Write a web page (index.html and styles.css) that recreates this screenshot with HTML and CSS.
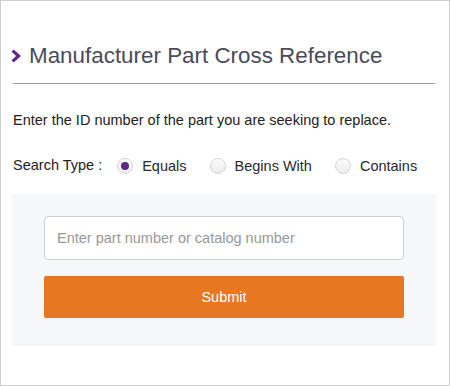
FILE: index.html
```html
<!DOCTYPE html>
<html lang="en">
<head>
  <meta charset="UTF-8" />
  <title>Manufacturer Part Cross Reference</title>
  <link rel="stylesheet" href="styles.css">
</head>
<body>
  <div class="page">
    <h2 class="title">
      <svg class="chevron" width="10" height="14" viewBox="0 0 10 14">
        <path d="M1.6 1.6 L7.6 7 L1.6 12.4" fill="none" stroke="#5b2a86" stroke-width="3.2"/>
      </svg>
      Manufacturer Part Cross Reference
    </h2>
    <hr class="rule">

    <p class="intro">Enter the ID number of the part you are seeking to replace.</p>

    <div class="search-type">
      <span class="label">Search Type :</span>
      <label class="option"><span class="radio checked"></span>Equals</label>
      <label class="option"><span class="radio"></span>Begins With</label>
      <label class="option"><span class="radio"></span>Contains</label>
    </div>

    <div class="panel">
      <input class="part-input" type="text" placeholder="Enter part number or catalog number">
      <button class="submit">Submit</button>
    </div>
  </div>
</body>
</html>
```

FILE: styles.css
```css
html, body {
  margin: 0;
  padding: 0;
}

body {
  font-family: "Liberation Sans", Arial, sans-serif;
  background: #fff;
}

.page {
  width: 422px;
  height: 384px;
  border: 1px solid #cfcfcf;
  padding: 0 14px 0 12px;
}

.title {
  display: flex;
  align-items: center;
  margin: 0 0 0 -2px;
  padding-top: 40px;
  height: 29px;
  font-size: 22.4px;
  font-weight: normal;
  color: #4b4b57;
}

.chevron {
  margin-right: 8px;
}

.rule {
  border: none;
  border-top: 1px solid #9a9a9a;
  margin: 13px 0 0;
}

.intro {
  margin: 28px 0 0;
  font-size: 14.5px;
  color: #222;
}

.search-type {
  display: flex;
  align-items: center;
  margin-top: 30px;
  font-size: 14.5px;
  color: #222;
  white-space: nowrap;
}

.label {
  margin-right: 15px;
  position: relative;
  top: -1px;
}

.option {
  display: flex;
  align-items: center;
  margin-right: 23px;
  color: #2a2a2a;
}

.option:last-child {
  margin-right: 0;
}

.radio {
  flex-shrink: 0;
  width: 14px;
  height: 14px;
  border: 1px solid #d5d5d5;
  border-radius: 50%;
  background: linear-gradient(#fcfcfc, #ececec);
  margin-right: 9px;
  position: relative;
}

.radio.checked::after {
  content: "";
  position: absolute;
  left: 3px;
  top: 3px;
  width: 8px;
  height: 8px;
  border-radius: 50%;
  background: #5b2a86;
}

.panel {
  margin-top: 20px;
  background: #f6f7f9;
  padding: 22px 31px 26px;
  box-shadow: 0 1px 2px rgba(0,0,0,0.08);
}

.part-input {
  display: block;
  width: 100%;
  height: 44px;
  box-sizing: border-box;
  border: 1px solid #cdd0d4;
  border-radius: 4px;
  padding: 0 12px;
  font-family: inherit;
  font-size: 14.5px;
  color: #333;
  background: #fff;
}

.part-input::placeholder {
  color: #999;
}

.submit {
  display: block;
  width: 100%;
  height: 42px;
  margin-top: 16px;
  border: none;
  border-radius: 2px;
  background: #e87722;
  color: #fff;
  font-family: inherit;
  font-size: 14.5px;
  cursor: pointer;
}
```
